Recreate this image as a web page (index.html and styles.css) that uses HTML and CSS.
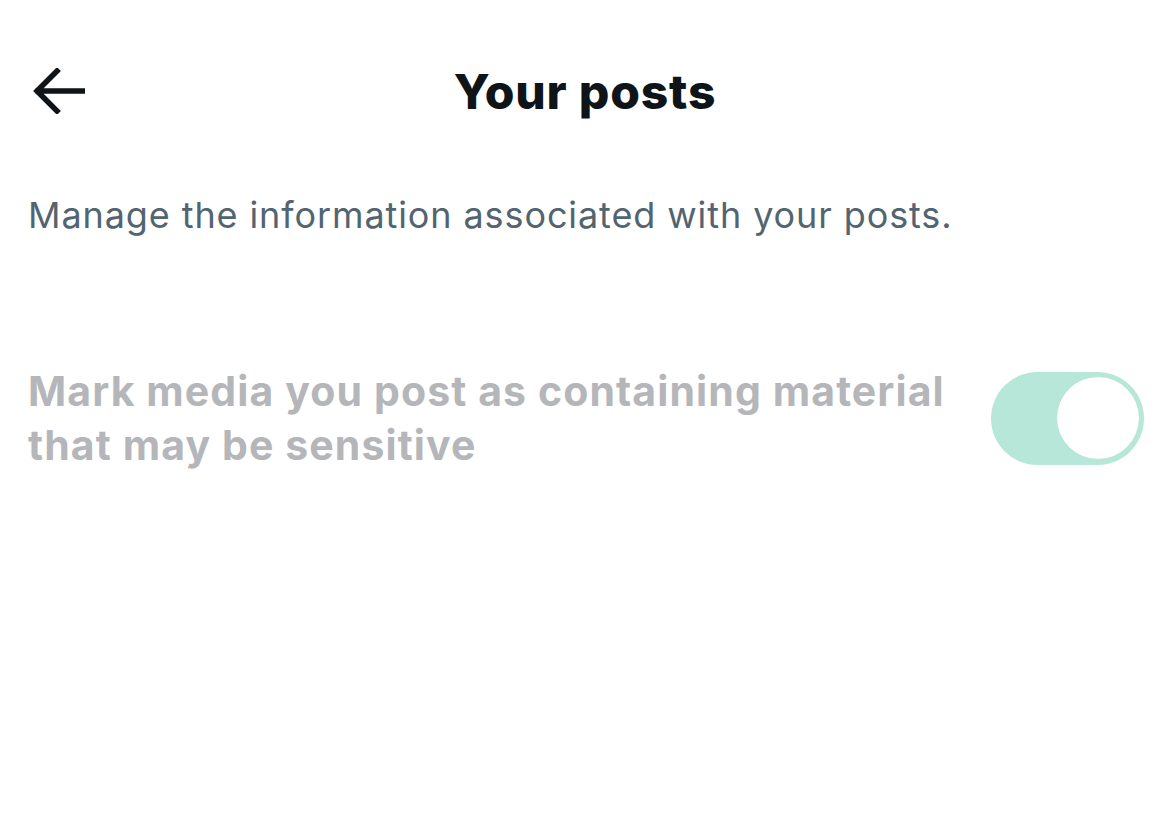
FILE: index.html
```html
<!DOCTYPE html>
<html lang="en">
<head>
  <meta charset="UTF-8">
  <meta name="viewport" content="width=device-width, initial-scale=1.0">
  <title>Your posts</title>
  <link rel="stylesheet" href="styles.css">
</head>
<body>

<div id="screen">
  <!-- Barra superior -->
  <header class="top-bar">
    <button class="back-btn" aria-label="Back">
      <svg viewBox="0 0 52 46" width="52" height="46">
        <path d="M50 23 H5 M24 3 L4 23 L24 43" fill="none" stroke="#0f1419" stroke-width="5.5" stroke-linecap="square"/>
      </svg>
    </button>
    <h1 class="title">Your posts</h1>
  </header>

  <p class="intro">Manage the information associated with your posts.</p>

  <!-- Ajuste de contenido sensible -->
  <div class="setting-row">
    <span class="setting-label">Mark media you post as containing material that may be sensitive</span>
    <div class="toggle on disabled">
      <div class="knob"></div>
    </div>
  </div>
</div>

</body>
</html>
```

FILE: styles.css
```css
/* Pantalla de ajustes */
body {
  margin: 0;
  background: #fff;
  font-family: Inter, "Noto Sans", sans-serif;
  color: #0f1419;
}

#screen {
  width: 1170px;
  padding-top: 44px;
  box-sizing: border-box;
  height: 835px;
  overflow: hidden;
}

.top-bar {
  display: flex;
  align-items: center;
  justify-content: center;
  position: relative;
  height: 94px;
}

.back-btn {
  position: absolute;
  left: 33px;
  top: 24px;
  padding: 0;
  border: none;
  background: none;
  line-height: 0;
}

.title {
  margin: 0;
  font-size: 48px;
  font-weight: 800;
  letter-spacing: 0.8px;
}

.intro {
  margin: 55px 28px 0;
  font-size: 36px;
  letter-spacing: 0.9px;
  color: #536471;
}

.setting-row {
  display: flex;
  align-items: center;
  justify-content: space-between;
  margin: 127px 26px 0 28px;
}

.setting-label {
  width: 955px;
  font-size: 41px;
  font-weight: 700;
  line-height: 54px;
  letter-spacing: 1.1px;
  color: #b5b6b9;
}

.toggle {
  flex-shrink: 0;
  width: 153px;
  height: 93px;
  border-radius: 47px;
  background: #b7e7d8;
  display: flex;
  align-items: center;
  justify-content: flex-end;
  padding: 0 5px;
  box-sizing: border-box;
}

.knob {
  width: 82px;
  height: 82px;
  border-radius: 50%;
  background: #fff;
  box-shadow: 0 0 1px rgba(0, 0, 0, 0.08);
}
```
